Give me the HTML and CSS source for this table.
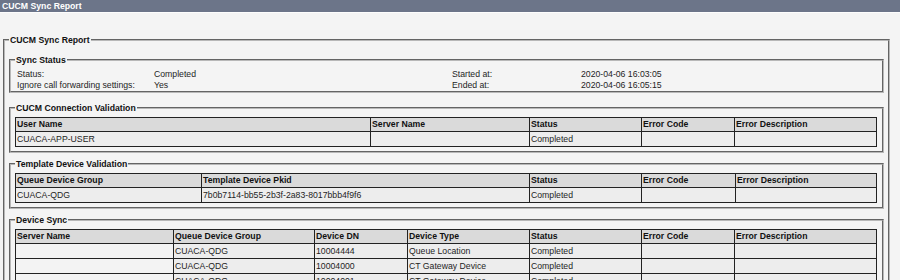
FILE: index.html
```html
<!DOCTYPE html>
<html>
<head>
<meta charset="utf-8">
<link rel="stylesheet" href="styles.css">
</head>
<body>
<div class="titlebar">CUCM Sync Report</div>
<fieldset class="outer">
  <legend>CUCM Sync Report</legend>

  <fieldset class="box first">
    <legend>Sync Status</legend>
    <div class="status-grid">
      <span>Status:</span><span>Completed</span><span>Started at:</span><span>2020-04-06 16:03:05</span>
      <span>Ignore call forwarding settings:</span><span>Yes</span><span>Ended at:</span><span>2020-04-06 16:05:15</span>
    </div>
  </fieldset>

  <fieldset class="box second">
    <legend>CUCM Connection Validation</legend>
    <table class="grid">
      <colgroup><col class="w355"><col class="w159"><col class="w112"><col class="w93"><col></colgroup>
      <tr class="head"><th>User Name</th><th>Server Name</th><th>Status</th><th>Error Code</th><th>Error Description</th></tr>
      <tr><td>CUACA-APP-USER</td><td></td><td>Completed</td><td></td><td></td></tr>
    </table>
  </fieldset>

  <fieldset class="box">
    <legend>Template Device Validation</legend>
    <table class="grid">
      <colgroup><col class="w186"><col class="w328"><col class="w112"><col class="w94"><col></colgroup>
      <tr class="head"><th>Queue Device Group</th><th>Template Device Pkid</th><th>Status</th><th>Error Code</th><th>Error Description</th></tr>
      <tr><td>CUACA-QDG</td><td>7b0b7114-bb55-2b3f-2a83-8017bbb4f9f6</td><td>Completed</td><td></td><td></td></tr>
    </table>
  </fieldset>

  <fieldset class="box">
    <legend>Device Sync</legend>
    <table class="grid">
      <colgroup><col class="w158"><col class="w141"><col class="w93"><col class="w122"><col class="w112"><col class="w93"><col></colgroup>
      <tr class="head"><th>Server Name</th><th>Queue Device Group</th><th>Device DN</th><th>Device Type</th><th>Status</th><th>Error Code</th><th>Error Description</th></tr>
      <tr><td class="redacted"></td><td>CUACA-QDG</td><td>10004444</td><td>Queue Location</td><td>Completed</td><td></td><td></td></tr>
      <tr><td class="redacted"></td><td>CUACA-QDG</td><td>10004000</td><td>CT Gateway Device</td><td>Completed</td><td></td><td></td></tr>
      <tr><td class="redacted"></td><td>CUACA-QDG</td><td>10004001</td><td>CT Gateway Device</td><td>Completed</td><td></td><td></td></tr>
      <tr><td class="redacted"></td><td>CUACA-QDG</td><td>10004002</td><td>CT Gateway Device</td><td>Completed</td><td></td><td></td></tr>
    </table>
  </fieldset>
</fieldset>
</body>
</html>
```
FILE: styles.css
```css
html, body {
  margin: 0;
  padding: 0;
  background: #f4f4f4;
  font-family: "Liberation Sans", Arial, sans-serif;
  font-size: 8.7px;
  color: #1e1e1e;
  overflow: hidden;
}
.titlebar {
  height: 12px;
  line-height: 12px;
  background: #6c7589;
  color: #fff;
  font-weight: bold;
  padding-left: 2px;
  border-bottom: 1px solid #fdfdfd;
}
fieldset {
  border: 2px groove #b8b8b8;
  padding: 0 4px 4px 4px;
  margin: 0;
  min-width: 0;
}
legend {
  font-weight: bold;
  line-height: 10px;
  padding: 0 1px;
  color: #111;
}
.outer {
  margin: 22px 10px 0 3px;
  padding-top: 0;
}
.box {
  margin-top: 6px;
}
.box.first {
  margin-top: 10px;
  padding-bottom: 0;
}
.box.second {
  margin-top: 10px;
}
.status-grid {
  display: grid;
  grid-template-columns: 137px 298px 129px 1fr;
  line-height: 11px;
  padding: 4px 0 0 2px;
}
.grid {
  margin-top: 4px;
  width: 862px;
  table-layout: fixed;
  border-collapse: collapse;
  border: 1px solid #333;
}
.grid th, .grid td {
  border: 1px solid #222;
  padding: 0 1px;
  text-align: left;
  white-space: nowrap;
  overflow: hidden;
}
.grid th {
  height: 13px;
  line-height: 13px;
  background: #dadada;
  font-weight: bold;
  color: #111;
}
.grid td {
  height: 14px;
  line-height: 14px;
  background: #ededed;
}
.grid td.redacted {
  background: #f3f3f3;
}
.w355 { width: 355px; }
.w159 { width: 159px; }
.w112 { width: 112px; }
.w93 { width: 93px; }
.w94 { width: 94px; }
.w186 { width: 186px; }
.w328 { width: 328px; }
.w158 { width: 158px; }
.w141 { width: 141px; }
.w122 { width: 122px; }
```
